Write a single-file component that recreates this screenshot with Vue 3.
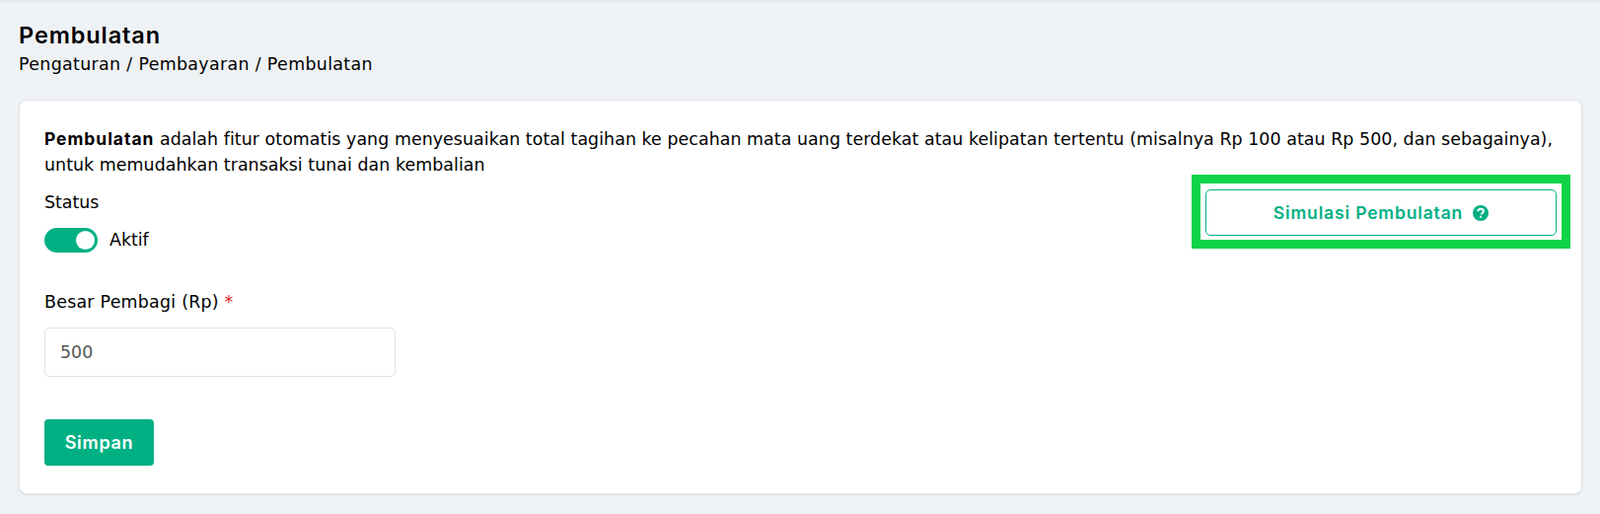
<template>
	<div class="page">
		<div class="topbar"></div>
		<header class="head">
			<h1>Pembulatan</h1>
			<p>Pengaturan / Pembayaran / Pembulatan</p>
		</header>

		<section class="card">
			<p class="desc">
				<b>Pembulatan</b> adalah fitur otomatis yang menyesuaikan total tagihan ke pecahan mata uang terdekat atau kelipatan tertentu (misalnya Rp 100 atau Rp 500, dan sebagainya),
				<br />untuk memudahkan transaksi tunai dan kembalian
			</p>

			<div class="row">
				<div class="status">
					<div class="label">Status</div>
					<div class="switch-row">
						<span class="switch"><span class="knob"></span></span>
						<span>Aktif</span>
					</div>
				</div>
				<div class="mark">
					<button class="sim">
						Simulasi Pembulatan
						<svg width="16" height="16" viewBox="0 0 16 16">
							<circle cx="8" cy="8" r="8" fill="#00b083" />
							<path d="M5.2 6.3c.1-1.6 1.3-2.6 2.9-2.6 1.6 0 2.8 1 2.8 2.3 0 1-.6 1.6-1.3 2-.6.4-.8.7-.8 1.3v.2" fill="none" stroke="#fff" stroke-width="2" />
							<rect x="7.1" y="10.7" width="2" height="2" rx=".4" fill="#fff" />
						</svg>
					</button>
				</div>
			</div>

			<label class="label field-label">Besar Pembagi (Rp) <span class="req">*</span></label>
			<input class="input" type="text" value="500" />

			<button class="save">Simpan</button>
		</section>
	</div>
</template>

<script setup>
</script>

<style>
	html, body {
		margin: 0;
		background: #eff2f5;
	}
</style>

<style scoped>
	.page {
		height: 521px;
		box-sizing: border-box;
		padding: 0 18px 0 19px;
		background: #eff2f5;
		color: #000;
		font-family: "DejaVu Sans", Inter, sans-serif;
		font-size: 17.4px;
		overflow: hidden;
	}

	.topbar {
		height: 3px;
		margin: 0 -18px 0 -19px;
		background: linear-gradient(#e2e5e9, #eff2f5);
	}

	.head {
		padding-top: 18px;
	}

	.head h1 {
		margin: 0;
		font-family: Inter, sans-serif;
		font-size: 23.5px;
		line-height: 30px;
		font-weight: 600;
		letter-spacing: 0.9px;
	}

	.head p {
		margin: 0;
		padding-top: 1px;
		line-height: 26px;
		letter-spacing: 0.35px;
	}

	.card {
		margin-top: 23px;
		height: 400px;
		box-sizing: border-box;
		padding: 26px 25px;
		background: #fff;
		border: 1px solid #dfe3e8;
		border-radius: 8px;
		box-shadow: 0 1px 2px rgba(0, 0, 0, 0.08);
	}

	.desc {
		margin: 0;
		line-height: 26px;
		white-space: nowrap;
		letter-spacing: 0.06px;
	}

	.desc b {
		font-family: Inter, sans-serif;
		font-weight: 700;
		letter-spacing: 1px;
	}

	.row {
		display: flex;
		justify-content: space-between;
		align-items: flex-start;
		height: 81px;
	}

	.status {
		padding-top: 13px;
	}

	.label {
		line-height: 24px;
	}

	.switch-row {
		display: flex;
		align-items: center;
		gap: 12px;
		margin-top: 13px;
		height: 26px;
	}

	.switch {
		display: flex;
		align-items: center;
		justify-content: flex-end;
		width: 54px;
		height: 25px;
		padding: 0 3px;
		box-sizing: border-box;
		background: #00b083;
		border-radius: 13px;
	}

	.knob {
		width: 19px;
		height: 19px;
		border-radius: 50%;
		background: #fff;
	}

	/* green annotation box round the button */
	.mark {
		margin: -3px -14px 0 0;
		padding: 6px 5px 4px;
		border: 9px solid #10d348;
		background: #fff;
	}

	.sim {
		display: flex;
		align-items: center;
		justify-content: center;
		gap: 10px;
		width: 356px;
		height: 47px;
		margin: 0;
		background: #fff;
		border: 1px solid #00b083;
		border-radius: 5px;
		color: #00b083;
		font: 600 17.5px Inter, sans-serif;
		letter-spacing: 0.85px;
	}

	.field-label {
		display: block;
		margin-top: 33px;
		letter-spacing: 0.25px;
	}

	.req {
		color: #e02020;
	}

	.input {
		display: block;
		width: 356px;
		height: 50px;
		box-sizing: border-box;
		margin-top: 14px;
		padding: 0 15px;
		background: #fff;
		border: 1px solid #dfe1e4;
		border-radius: 5px;
		color: #555;
		font: 17.4px "DejaVu Sans", Inter, sans-serif;
	}

	.save {
		display: block;
		width: 111px;
		height: 47px;
		margin-top: 43px;
		background: #00b083;
		border: 0;
		border-radius: 4px;
		color: #fff;
		font: 600 18px Inter, sans-serif;
		letter-spacing: 0.7px;
	}
</style>
